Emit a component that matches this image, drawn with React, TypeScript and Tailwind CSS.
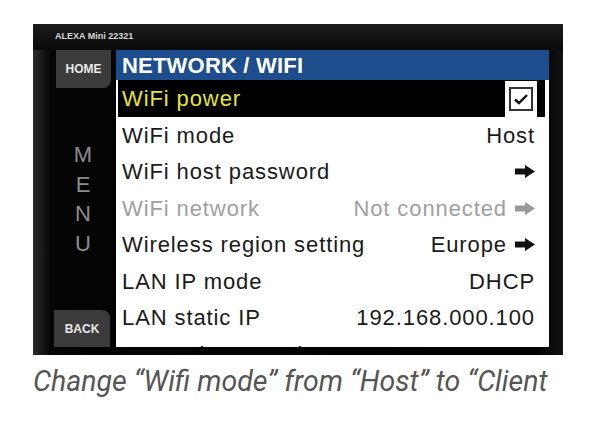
import React from "react";

type Row = {
  label: string;
  value?: string;
  arrow?: boolean;
  disabled?: boolean;
};

const rows: Row[] = [
  { label: "WiFi mode", value: "Host" },
  { label: "WiFi host password", arrow: true },
  { label: "WiFi network", value: "Not connected", arrow: true, disabled: true },
  { label: "Wireless region setting", value: "Europe", arrow: true },
  { label: "LAN IP mode", value: "DHCP" },
  { label: "LAN static IP", value: "192.168.000.100" },
  { label: "LAN subnet mask", value: "255.255.255.000" },
];

function Arrow({ color }: { color: string }) {
  return (
    <svg width="20" height="13" viewBox="0 0 20 13" className="shrink-0">
      <path d="M0 3.5 H10 V0 L20 6.5 L10 13 V9.5 H0 Z" fill={color} />
    </svg>
  );
}

export default function App() {
  return (
    <div className="w-[600px] h-[428px] bg-white overflow-hidden pt-[24px] font-['Liberation_Sans',Arial,sans-serif]">
      {/* camera screen */}
      <div className="ml-[33px] w-[530px] h-[331px] flex flex-col bg-[linear-gradient(to_right,#2c2c2c,#050505_18px,#000_500px,#111)] pb-[8px]">
        <div className="h-[26px] flex items-center pl-[22px] text-[9px] font-bold text-[#d8d8d8] bg-[linear-gradient(to_bottom,#1c1c1c,#0a0a0a)]">
          ALEXA Mini 22321
        </div>
        <div className="flex flex-1 min-h-0">
          {/* side menu */}
          <div className="w-[83px] flex flex-col items-start">
            <div className="ml-[23px] w-[55px] h-[38px] bg-[#3b3b3b] rounded-br-[8px] flex items-center justify-center text-[12px] font-bold text-[#e8e8e8]">
              HOME
            </div>
            <div className="w-full flex flex-col items-center pl-[17px] mt-[52px] text-[22px] text-[#8c8c8c] leading-[29.5px]">
              <span>M</span>
              <span>E</span>
              <span>N</span>
              <span>U</span>
            </div>
            <div className="mt-auto ml-[21px] w-[56px] h-[37px] bg-[#3b3b3b] rounded-tr-[8px] flex items-center justify-center text-[12px] font-bold text-[#e8e8e8]">
              BACK
            </div>
          </div>

          {/* list */}
          <div className="w-[433px] flex flex-col bg-white overflow-hidden">
            <div className="h-[30px] shrink-0 bg-[#1d4d8c] flex items-center pl-[6px] text-[22px] font-bold text-white tracking-[0.2px]">
              NETWORK / WIFI
            </div>
            <div className="h-[37px] shrink-0 ml-[2px] mr-[4px] bg-black flex items-center pl-[4px] pr-[8px] text-[22px] text-[#e6e43a] tracking-[0.9px]">
              <span className="flex-1">WiFi power</span>
              <div className="w-[32px] h-[36px] bg-white flex items-center justify-center">
                <div className="w-[24px] h-[24px] border-2 border-[#333] flex items-center justify-center">
                  <svg width="16" height="12" viewBox="0 0 16 12">
                    <path d="M2 6.5 L6 10 L14 2" stroke="#111" strokeWidth="2.4" fill="none" />
                  </svg>
                </div>
              </div>
            </div>
            {rows.map((r) => (
              <div
                key={r.label}
                className={
                  "h-[36.5px] shrink-0 flex items-center pl-[6px] pr-[14px] text-[22px] tracking-[0.9px] " +
                  (r.disabled ? "text-[#a0a0a0]" : "text-[#1a1a1a]")
                }
              >
                <span className="flex-1 whitespace-nowrap">{r.label}</span>
                {r.value && <span className="whitespace-nowrap">{r.value}</span>}
                {r.arrow && (
                  <span className="ml-[8px] flex items-center">
                    <Arrow color={r.disabled ? "#9a9a9a" : "#111"} />
                  </span>
                )}
              </div>
            ))}
          </div>
        </div>
      </div>

      <p className="mt-[10px] ml-[33px] text-[28.5px] leading-[34px] italic text-[#555] font-['Roboto',sans-serif] whitespace-nowrap">
        Change “Wifi mode” from “Host” to “Client
      </p>
    </div>
  );
}
